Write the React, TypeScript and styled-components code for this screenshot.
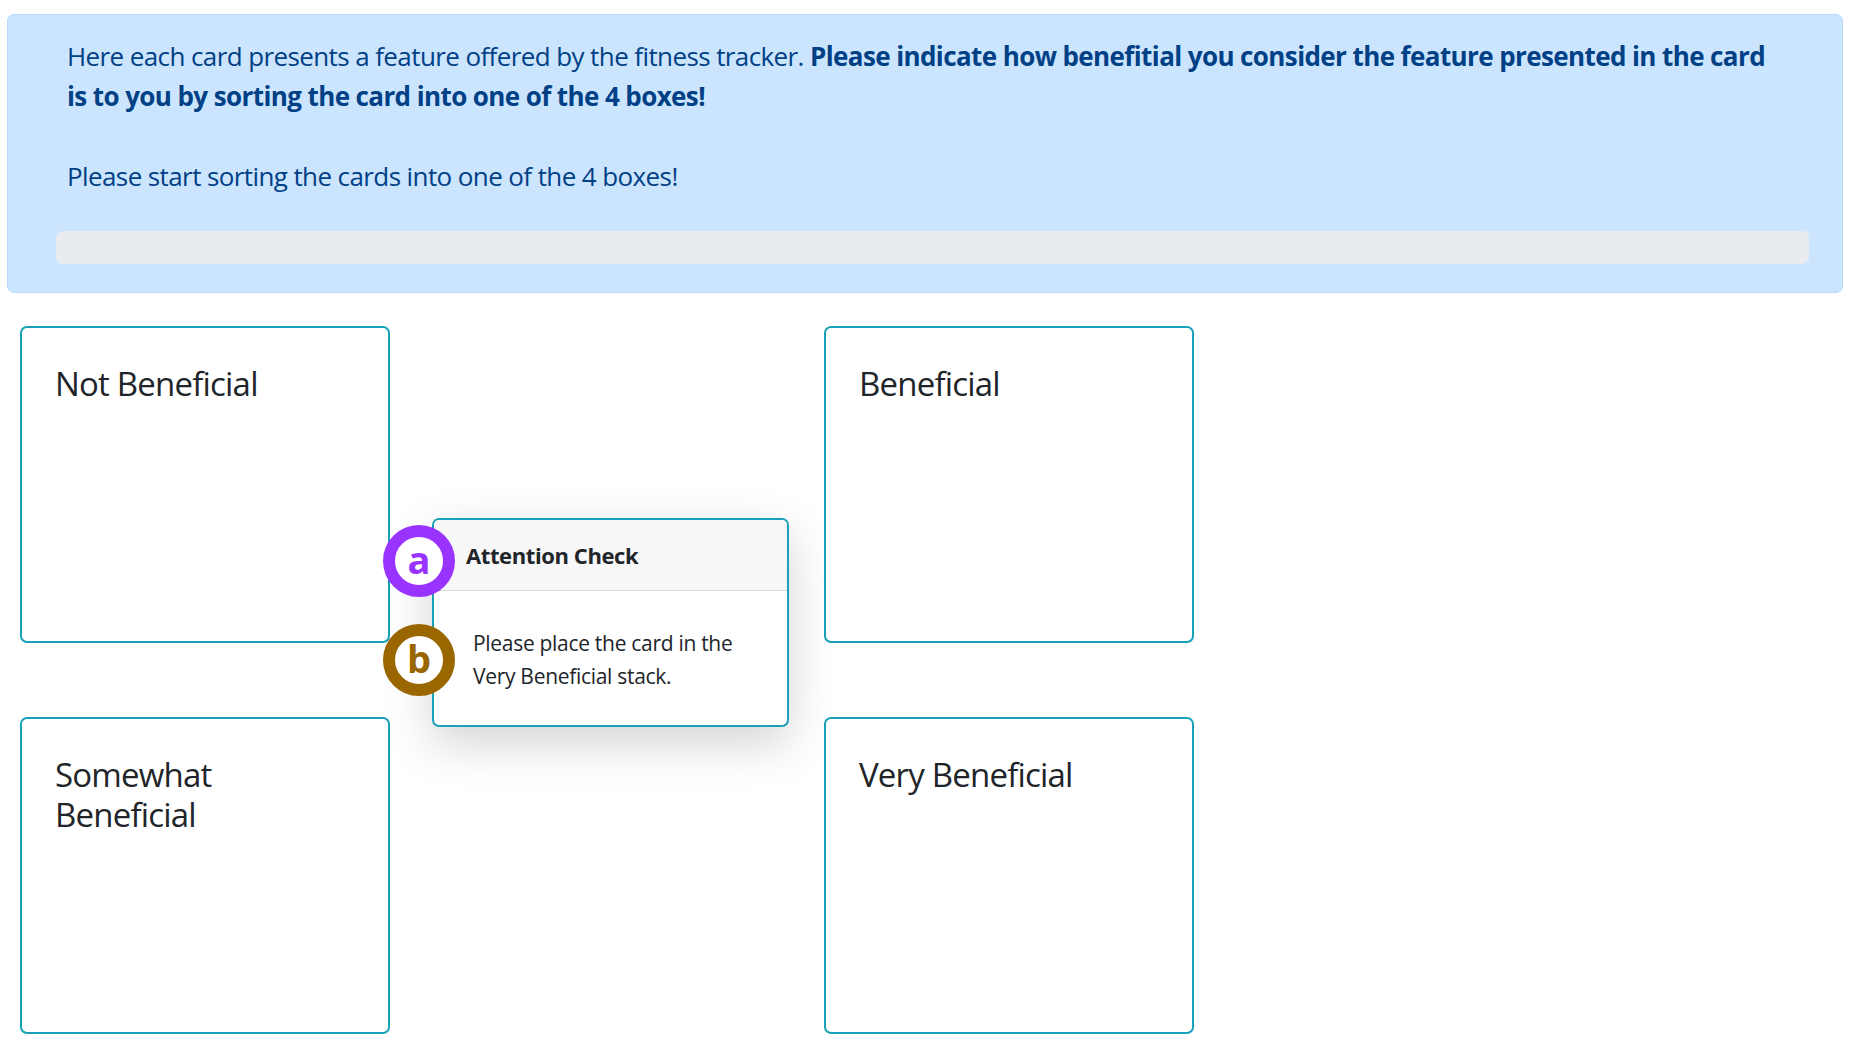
import React from 'react';
import styled, { createGlobalStyle } from 'styled-components';

const GlobalStyle = createGlobalStyle`
  html, body {
    margin: 0;
    padding: 0;
    background: #fff;
  }
  body {
    font-family: "Open Sans", "Noto Sans", "Liberation Sans", sans-serif;
    color: #212529;
  }
`;

const Page = styled.div`
  padding: 14px 18px 20px 7px;
`;

const Alert = styled.div`
  background: #cce5ff;
  border: 1.5px solid #b8daff;
  border-radius: 7px;
  color: #004085;
  padding: 21px 33px 28px 48px;
`;

const Intro = styled.div`
  font-size: 26px;
  line-height: 40px;
  padding: 0 30px 0 11px;
  letter-spacing: -0.6px;

  b {
    font-weight: 700;
  }
`;

const Progress = styled.div`
  height: 33px;
  margin-top: 35px;
  border-radius: 7px;
  background: #e9ecef;
`;

const Board = styled.div`
  position: relative;
  display: grid;
  grid-template-columns: 370px 370px;
  grid-template-rows: 317px 317px;
  column-gap: 434px;
  row-gap: 74px;
  margin-top: 33px;
  padding-left: 13px;
`;

const Stack = styled.div`
  border: 2px solid #17a2b8;
  border-radius: 7px;
  padding: 36px 33px 33px;
  background: #fff;
`;

const StackTitle = styled.h5`
  margin: 0;
  font-size: 33px;
  font-weight: 400;
  line-height: 40px;
  letter-spacing: -0.8px;
  color: #212529;
  max-width: 240px;
`;

const DragCard = styled.div`
  position: absolute;
  left: 425px;
  top: 192px;
  width: 357px;
  box-sizing: border-box;
  border: 2px solid #17a2b8;
  border-radius: 7px;
  background: #fff;
  box-shadow: 0 16px 48px rgba(0, 0, 0, 0.175);
`;

const CardHeader = styled.div`
  height: 70px;
  display: flex;
  align-items: center;
  padding: 0 32px;
  background: #f7f7f7;
  border-bottom: 1.5px solid rgba(0, 0, 0, 0.125);
  border-radius: 5px 5px 0 0;
  font-size: 22px;
  font-weight: 700;
  letter-spacing: -0.4px;
  color: #212529;
`;

const CardBody = styled.div`
  padding: 36px 30px 32px 39px;
  font-size: 21px;
  line-height: 33px;
  letter-spacing: -0.3px;
  color: #212529;
`;

const Marker = styled.div<{ $color: string; $top: number }>`
  position: absolute;
  left: -51px;
  top: ${(p) => p.$top}px;
  width: 72px;
  height: 72px;
  box-sizing: border-box;
  border-radius: 50%;
  border: 12px solid ${(p) => p.$color};
  background: #fff;
  color: ${(p) => p.$color};
  display: flex;
  align-items: center;
  justify-content: center;
  font-size: 38px;
  font-weight: 700;
  line-height: 1;
  padding-bottom: 4px;
`;

const stacks = ['Not Beneficial', 'Beneficial', 'Somewhat Beneficial', 'Very Beneficial'];

const App: React.FC = () => {
  return (
    <Page>
      <GlobalStyle />
      <Alert>
        <Intro>
          Here each card presents a feature offered by the fitness tracker.{' '}
          <b>
            Please indicate how benefitial you consider the feature presented in the card is to you by
            sorting the card into one of the 4 boxes!
          </b>
          <br />
          <br />
          Please start sorting the cards into one of the 4 boxes!
        </Intro>
        <Progress />
      </Alert>

      <Board>
        {stacks.map((label) => (
          <Stack key={label}>
            <StackTitle>{label}</StackTitle>
          </Stack>
        ))}

        {/* card currently being dragged */}
        <DragCard>
          <Marker $color="#9933ff" $top={5}>a</Marker>
          <Marker $color="#996600" $top={104}>b</Marker>
          <CardHeader>Attention Check</CardHeader>
          <CardBody>Please place the card in the Very Beneficial stack.</CardBody>
        </DragCard>
      </Board>
    </Page>
  );
};

export default App;
